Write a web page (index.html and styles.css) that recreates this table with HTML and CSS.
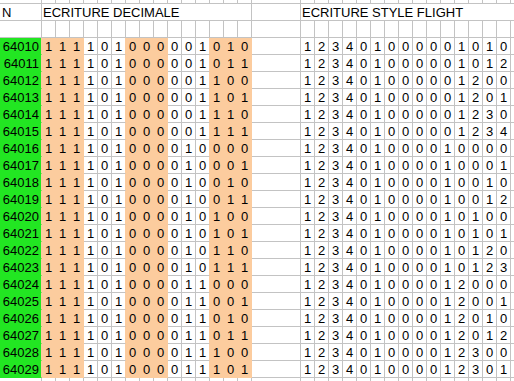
FILE: index.html
```html
<!DOCTYPE html>
<html lang="fr">
<head>
<meta charset="utf-8">
<title>Ecriture style flight</title>
<link rel="stylesheet" href="styles.css">
</head>
<body>
<div class="sheet">
<ul class="row top"><li><li><li><li><li><li><li><li><li><li><li><li><li><li><li><li><li><li><li><li><li><li><li><li><li><li><li><li><li><li><li><li><li></ul>
<ul class="row head"><li class="n">N<li class="title">ECRITURE DECIMALE<li><li class="title wide">ECRITURE STYLE FLIGHT</ul>
<ul class="row"><li><li><li><li><li><li><li><li><li><li><li><li><li><li><li><li><li><li><li><li><li><li><li><li><li><li><li><li><li><li><li><li><li></ul>
<ul class="row data"><li>64010<li>1<li>1<li>1<li>1<li>0<li>1<li>0<li>0<li>0<li>0<li>0<li>1<li>0<li>1<li>0<li><li>1<li>2<li>3<li>4<li>0<li>1<li>0<li>0<li>0<li>0<li>0<li>1<li>0<li>1<li>0<li></ul>
<ul class="row data"><li>64011<li>1<li>1<li>1<li>1<li>0<li>1<li>0<li>0<li>0<li>0<li>0<li>1<li>0<li>1<li>1<li><li>1<li>2<li>3<li>4<li>0<li>1<li>0<li>0<li>0<li>0<li>0<li>1<li>0<li>1<li>2<li></ul>
<ul class="row data"><li>64012<li>1<li>1<li>1<li>1<li>0<li>1<li>0<li>0<li>0<li>0<li>0<li>1<li>1<li>0<li>0<li><li>1<li>2<li>3<li>4<li>0<li>1<li>0<li>0<li>0<li>0<li>0<li>1<li>2<li>0<li>0<li></ul>
<ul class="row data"><li>64013<li>1<li>1<li>1<li>1<li>0<li>1<li>0<li>0<li>0<li>0<li>0<li>1<li>1<li>0<li>1<li><li>1<li>2<li>3<li>4<li>0<li>1<li>0<li>0<li>0<li>0<li>0<li>1<li>2<li>0<li>1<li></ul>
<ul class="row data"><li>64014<li>1<li>1<li>1<li>1<li>0<li>1<li>0<li>0<li>0<li>0<li>0<li>1<li>1<li>1<li>0<li><li>1<li>2<li>3<li>4<li>0<li>1<li>0<li>0<li>0<li>0<li>0<li>1<li>2<li>3<li>0<li></ul>
<ul class="row data"><li>64015<li>1<li>1<li>1<li>1<li>0<li>1<li>0<li>0<li>0<li>0<li>0<li>1<li>1<li>1<li>1<li><li>1<li>2<li>3<li>4<li>0<li>1<li>0<li>0<li>0<li>0<li>0<li>1<li>2<li>3<li>4<li></ul>
<ul class="row data"><li>64016<li>1<li>1<li>1<li>1<li>0<li>1<li>0<li>0<li>0<li>0<li>1<li>0<li>0<li>0<li>0<li><li>1<li>2<li>3<li>4<li>0<li>1<li>0<li>0<li>0<li>0<li>1<li>0<li>0<li>0<li>0<li></ul>
<ul class="row data"><li>64017<li>1<li>1<li>1<li>1<li>0<li>1<li>0<li>0<li>0<li>0<li>1<li>0<li>0<li>0<li>1<li><li>1<li>2<li>3<li>4<li>0<li>1<li>0<li>0<li>0<li>0<li>1<li>0<li>0<li>0<li>1<li></ul>
<ul class="row data"><li>64018<li>1<li>1<li>1<li>1<li>0<li>1<li>0<li>0<li>0<li>0<li>1<li>0<li>0<li>1<li>0<li><li>1<li>2<li>3<li>4<li>0<li>1<li>0<li>0<li>0<li>0<li>1<li>0<li>0<li>1<li>0<li></ul>
<ul class="row data"><li>64019<li>1<li>1<li>1<li>1<li>0<li>1<li>0<li>0<li>0<li>0<li>1<li>0<li>0<li>1<li>1<li><li>1<li>2<li>3<li>4<li>0<li>1<li>0<li>0<li>0<li>0<li>1<li>0<li>0<li>1<li>2<li></ul>
<ul class="row data"><li>64020<li>1<li>1<li>1<li>1<li>0<li>1<li>0<li>0<li>0<li>0<li>1<li>0<li>1<li>0<li>0<li><li>1<li>2<li>3<li>4<li>0<li>1<li>0<li>0<li>0<li>0<li>1<li>0<li>1<li>0<li>0<li></ul>
<ul class="row data"><li>64021<li>1<li>1<li>1<li>1<li>0<li>1<li>0<li>0<li>0<li>0<li>1<li>0<li>1<li>0<li>1<li><li>1<li>2<li>3<li>4<li>0<li>1<li>0<li>0<li>0<li>0<li>1<li>0<li>1<li>0<li>1<li></ul>
<ul class="row data"><li>64022<li>1<li>1<li>1<li>1<li>0<li>1<li>0<li>0<li>0<li>0<li>1<li>0<li>1<li>1<li>0<li><li>1<li>2<li>3<li>4<li>0<li>1<li>0<li>0<li>0<li>0<li>1<li>0<li>1<li>2<li>0<li></ul>
<ul class="row data"><li>64023<li>1<li>1<li>1<li>1<li>0<li>1<li>0<li>0<li>0<li>0<li>1<li>0<li>1<li>1<li>1<li><li>1<li>2<li>3<li>4<li>0<li>1<li>0<li>0<li>0<li>0<li>1<li>0<li>1<li>2<li>3<li></ul>
<ul class="row data"><li>64024<li>1<li>1<li>1<li>1<li>0<li>1<li>0<li>0<li>0<li>0<li>1<li>1<li>0<li>0<li>0<li><li>1<li>2<li>3<li>4<li>0<li>1<li>0<li>0<li>0<li>0<li>1<li>2<li>0<li>0<li>0<li></ul>
<ul class="row data"><li>64025<li>1<li>1<li>1<li>1<li>0<li>1<li>0<li>0<li>0<li>0<li>1<li>1<li>0<li>0<li>1<li><li>1<li>2<li>3<li>4<li>0<li>1<li>0<li>0<li>0<li>0<li>1<li>2<li>0<li>0<li>1<li></ul>
<ul class="row data"><li>64026<li>1<li>1<li>1<li>1<li>0<li>1<li>0<li>0<li>0<li>0<li>1<li>1<li>0<li>1<li>0<li><li>1<li>2<li>3<li>4<li>0<li>1<li>0<li>0<li>0<li>0<li>1<li>2<li>0<li>1<li>0<li></ul>
<ul class="row data"><li>64027<li>1<li>1<li>1<li>1<li>0<li>1<li>0<li>0<li>0<li>0<li>1<li>1<li>0<li>1<li>1<li><li>1<li>2<li>3<li>4<li>0<li>1<li>0<li>0<li>0<li>0<li>1<li>2<li>0<li>1<li>2<li></ul>
<ul class="row data"><li>64028<li>1<li>1<li>1<li>1<li>0<li>1<li>0<li>0<li>0<li>0<li>1<li>1<li>1<li>0<li>0<li><li>1<li>2<li>3<li>4<li>0<li>1<li>0<li>0<li>0<li>0<li>1<li>2<li>3<li>0<li>0<li></ul>
<ul class="row data"><li>64029<li>1<li>1<li>1<li>1<li>0<li>1<li>0<li>0<li>0<li>0<li>1<li>1<li>1<li>0<li>1<li><li>1<li>2<li>3<li>4<li>0<li>1<li>0<li>0<li>0<li>0<li>1<li>2<li>3<li>0<li>1<li></ul>
<ul class="row"><li><li><li><li><li><li><li><li><li><li><li><li><li><li><li><li><li><li><li><li><li><li><li><li><li><li><li><li><li><li><li><li><li></ul>
</div>
</body>
</html>
```

FILE: styles.css
```css
* { box-sizing: border-box; margin: 0; padding: 0; }
html, body { overflow: hidden; background: #fff; }
body { width: 525px; font: 13px/14px "Liberation Sans", Arial, sans-serif; color: #000; }
.sheet { display: flex; flex-direction: column; }
.row {
  display: grid;
  grid-template-columns: 42px repeat(15, 14px) 49px repeat(15, 14px) 14px;
  height: 17px;
  list-style: none;
}
.row > li {
  border-right: 1px solid #c3c3c3;
  border-bottom: 1px solid #c3c3c3;
  padding-top: 2px;
  text-align: center;
  white-space: nowrap;
}
.top { height: 4px; }
.top > li { padding: 0; }
.head .n { text-align: left; padding-left: 2px; }
.head .title { grid-column: span 15; text-align: left; padding-left: 1px; }
.head .wide { grid-column: span 16; border-right: 0; }

.data > li:nth-child(-n+4),
.data > li:nth-child(n+8):nth-child(-n+10),
.data > li:nth-child(n+14):nth-child(-n+16) {
  background: #fccc9e;
  border-right-color: #fccc9e;
  border-bottom-color: #fccc9e;
}
.data > li:nth-child(7),
.data > li:nth-child(13) { border-right-color: #fccc9e; }
.data > li:first-child {
  background: #22e622;
  border-bottom-color: #22e622;
  text-align: right;
  padding-right: 2px;
}
```
